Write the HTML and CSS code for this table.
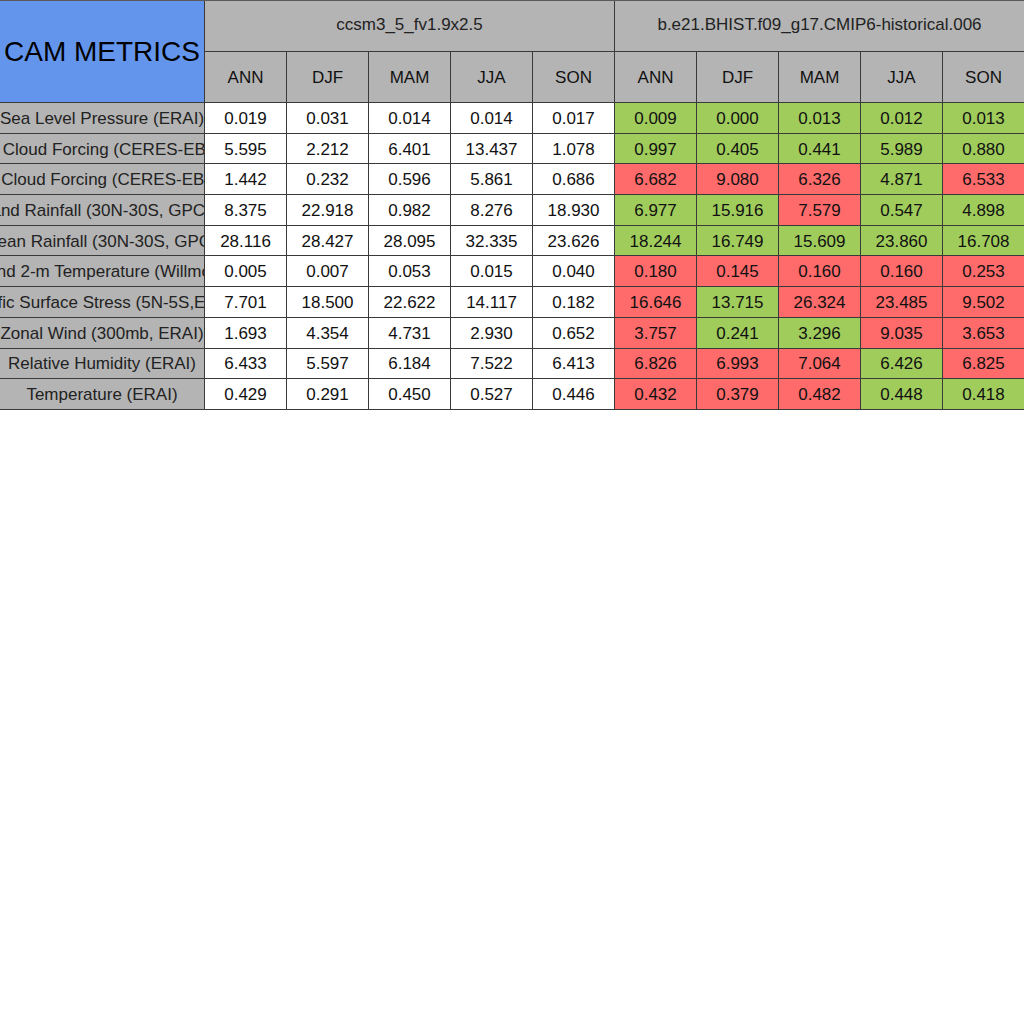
FILE: index.html
```html
<!DOCTYPE html>
<html>
<head>
<meta charset="utf-8">
<link rel="stylesheet" href="styles.css">
</head>
<body>
<div class="grid">
  <div class="title">CAM METRICS</div>
  <div class="case case1">ccsm3_5_fv1.9x2.5</div>
  <div class="case case2">b.e21.BHIST.f09_g17.CMIP6-historical.006</div>
  <div class="hd">ANN</div><div class="hd">DJF</div><div class="hd">MAM</div><div class="hd">JJA</div><div class="hd">SON</div>
  <div class="hd">ANN</div><div class="hd">DJF</div><div class="hd">MAM</div><div class="hd">JJA</div><div class="hd">SON</div>

  <div class="lbl"><span>Sea Level Pressure (ERAI)</span></div>
  <div class="c">0.019</div><div class="c">0.031</div><div class="c">0.014</div><div class="c">0.014</div><div class="c">0.017</div>
  <div class="c g">0.009</div><div class="c g">0.000</div><div class="c g">0.013</div><div class="c g">0.012</div><div class="c g">0.013</div>

  <div class="lbl"><span>SW Cloud Forcing (CERES-EBAF)</span></div>
  <div class="c">5.595</div><div class="c">2.212</div><div class="c">6.401</div><div class="c">13.437</div><div class="c">1.078</div>
  <div class="c g">0.997</div><div class="c g">0.405</div><div class="c g">0.441</div><div class="c g">5.989</div><div class="c g">0.880</div>

  <div class="lbl"><span>LW Cloud Forcing (CERES-EBAF)</span></div>
  <div class="c">1.442</div><div class="c">0.232</div><div class="c">0.596</div><div class="c">5.861</div><div class="c">0.686</div>
  <div class="c r">6.682</div><div class="c r">9.080</div><div class="c r">6.326</div><div class="c g">4.871</div><div class="c r">6.533</div>

  <div class="lbl"><span>Land Rainfall (30N-30S, GPCP)</span></div>
  <div class="c">8.375</div><div class="c">22.918</div><div class="c">0.982</div><div class="c">8.276</div><div class="c">18.930</div>
  <div class="c g">6.977</div><div class="c g">15.916</div><div class="c r">7.579</div><div class="c g">0.547</div><div class="c g">4.898</div>

  <div class="lbl"><span>Ocean Rainfall (30N-30S, GPCP)</span></div>
  <div class="c">28.116</div><div class="c">28.427</div><div class="c">28.095</div><div class="c">32.335</div><div class="c">23.626</div>
  <div class="c g">18.244</div><div class="c g">16.749</div><div class="c g">15.609</div><div class="c g">23.860</div><div class="c g">16.708</div>

  <div class="lbl"><span>Land 2-m Temperature (Willmott)</span></div>
  <div class="c">0.005</div><div class="c">0.007</div><div class="c">0.053</div><div class="c">0.015</div><div class="c">0.040</div>
  <div class="c r">0.180</div><div class="c r">0.145</div><div class="c r">0.160</div><div class="c r">0.160</div><div class="c r">0.253</div>

  <div class="lbl"><span>Pacific Surface Stress (5N-5S,ERAI)</span></div>
  <div class="c">7.701</div><div class="c">18.500</div><div class="c">22.622</div><div class="c">14.117</div><div class="c">0.182</div>
  <div class="c r">16.646</div><div class="c g">13.715</div><div class="c r">26.324</div><div class="c r">23.485</div><div class="c r">9.502</div>

  <div class="lbl"><span>Zonal Wind (300mb, ERAI)</span></div>
  <div class="c">1.693</div><div class="c">4.354</div><div class="c">4.731</div><div class="c">2.930</div><div class="c">0.652</div>
  <div class="c r">3.757</div><div class="c g">0.241</div><div class="c g">3.296</div><div class="c r">9.035</div><div class="c r">3.653</div>

  <div class="lbl"><span>Relative Humidity (ERAI)</span></div>
  <div class="c">6.433</div><div class="c">5.597</div><div class="c">6.184</div><div class="c">7.522</div><div class="c">6.413</div>
  <div class="c r">6.826</div><div class="c r">6.993</div><div class="c r">7.064</div><div class="c g">6.426</div><div class="c r">6.825</div>

  <div class="lbl"><span>Temperature (ERAI)</span></div>
  <div class="c">0.429</div><div class="c">0.291</div><div class="c">0.450</div><div class="c">0.527</div><div class="c">0.446</div>
  <div class="c r">0.432</div><div class="c r">0.379</div><div class="c r">0.482</div><div class="c g">0.448</div><div class="c g">0.418</div>
</div>
</body>
</html>
```
FILE: styles.css
```css
html, body {
  margin: 0;
  padding: 0;
  background: #ffffff;
}
body {
  font-family: "Liberation Sans", Arial, sans-serif;
  color: #111;
}
.grid {
  display: grid;
  width: 1024px;
  grid-template-columns: 204px repeat(10, 81px);
  grid-template-rows: 50px 50px repeat(10, 29.7px);
  gap: 1px;
  background: #3a3a3a;
  border-top: 1px solid #5a5a5a;
  border-bottom: 1px solid #3a3a3a;
}
.grid > div {
  display: flex;
  align-items: center;
  justify-content: center;
  overflow: hidden;
  white-space: nowrap;
  font-size: 17px;
  padding-top: 2px;
  box-sizing: border-box;
}
.title {
  grid-row: 1 / span 2;
  background: #6495ed;
  font-size: 28px !important;
  color: #000;
  padding-top: 0 !important;
}
.case {
  background: #b4b4b4;
  color: #222;
  padding-top: 0 !important;
  padding-bottom: 2px;
}
.case1 { grid-column: 2 / span 5; }
.case2 { grid-column: 7 / span 5; }
.hd {
  background: #b4b4b4;
  color: #111;
}
.lbl {
  background: #b4b4b4;
  color: #222;
}
.lbl span {
  flex: none;
}
.c {
  background: #ffffff;
}
.c.g { background: #a0cc5c; }
.c.r { background: #ff6b6b; }
```
